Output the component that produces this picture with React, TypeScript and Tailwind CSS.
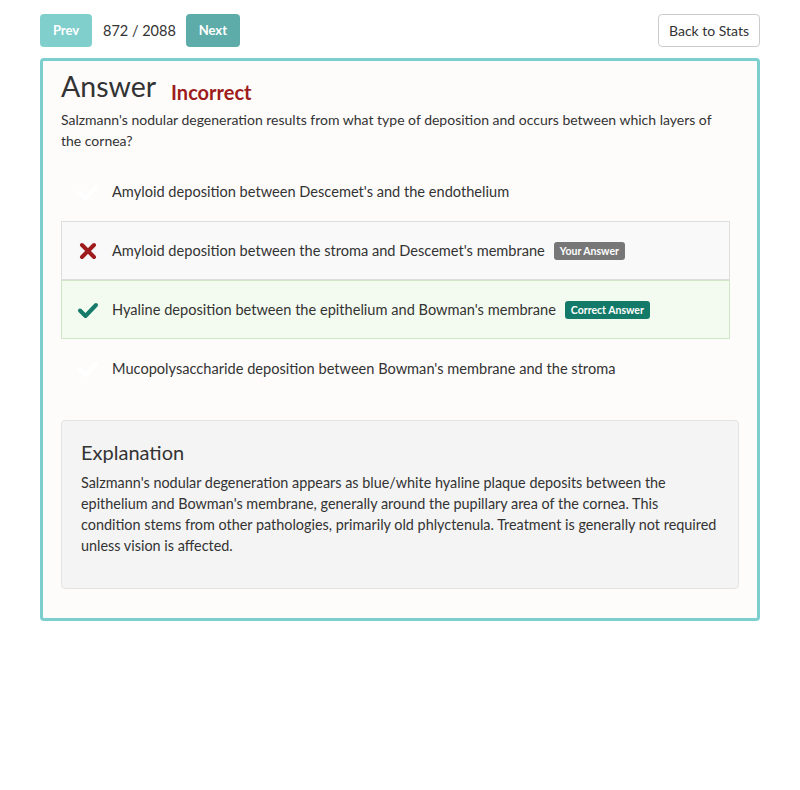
import React from 'react';

const font = { fontFamily: 'Lato, "Open Sans", sans-serif' };

type Option = {
  text: string;
  state: 'none' | 'wrong' | 'right';
};

const options: Option[] = [
  { text: "Amyloid deposition between Descemet's and the endothelium", state: 'none' },
  { text: "Amyloid deposition between the stroma and Descemet's membrane", state: 'wrong' },
  { text: "Hyaline deposition between the epithelium and Bowman's membrane", state: 'right' },
  { text: "Mucopolysaccharide deposition between Bowman's membrane and the stroma", state: 'none' },
];

function XIcon() {
  return (
    <svg width="18" height="18" viewBox="0 0 18 18">
      <path d="M3 3 L15 15 M15 3 L3 15" stroke="#9e1c1c" strokeWidth="4" strokeLinecap="round" />
    </svg>
  );
}

function CheckIcon({ color = '#157a69' }: { color?: string }) {
  return (
    <svg width="22" height="18" viewBox="0 0 22 18">
      <path d="M3 9.5 L8.5 15 L19 4" stroke={color} strokeWidth="4" fill="none" strokeLinecap="round" strokeLinejoin="round" />
    </svg>
  );
}

function OptionRow({ opt }: { opt: Option }) {
  let box = 'border border-transparent';
  if (opt.state === 'wrong') box = 'border border-[#dddddd] bg-[#f9f9f9]';
  if (opt.state === 'right') box = 'border border-[#cfe6c9] bg-[#f3fbf0]';
  return (
    <div className={`flex h-[59px] items-center px-[15px] ${box}`}>
      <div className="mr-[13px] flex w-[22px] justify-center">
        {opt.state === 'wrong' && <XIcon />}
        {opt.state === 'right' && <CheckIcon />}
        {opt.state === 'none' && <CheckIcon color="#ffffff" />}
      </div>
      <span className="text-[14.6px] text-[#333]">{opt.text}</span>
      {opt.state === 'wrong' && (
        <span className="ml-[9px] rounded-[3px] bg-[#777777] px-[6px] py-[2px] text-[10.5px] font-bold leading-[14px] text-white">
          Your Answer
        </span>
      )}
      {opt.state === 'right' && (
        <span className="ml-[9px] rounded-[3px] bg-[#137a69] px-[6px] py-[2px] text-[10.5px] font-bold leading-[14px] text-white">
          Correct Answer
        </span>
      )}
    </div>
  );
}

export default function App() {
  return (
    <div className="min-h-[790px] w-[800px] bg-white px-[40px] pt-[14px]" style={font}>
      <div className="flex items-center justify-between">
        <div className="flex items-center">
          <button className="h-[33px] w-[52px] rounded-[4px] bg-[#80cfcd] text-[13px] font-bold text-white">
            Prev
          </button>
          <span className="ml-[11px] mr-[10px] text-[14.5px] text-[#333]">872 / 2088</span>
          <button className="h-[33px] w-[54px] rounded-[4px] bg-[#5eaca9] text-[13px] font-bold text-white">
            Next
          </button>
        </div>
        <button className="h-[33px] w-[102px] rounded-[4px] border border-[#cccccc] bg-white text-[14px] text-[#333]">
          Back to Stats
        </button>
      </div>

      <div className="mt-[11px] rounded-[4px] border-[3px] border-[#7dcfcf] bg-[#fdfcfb] px-[18px] pb-[29px] pt-[5px]">
        <div className="flex items-end">
          <h1 className="text-[28.5px] leading-[40px] text-[#333]">Answer</h1>
          <span className="mb-[0px] ml-[15px] text-[20px] font-bold leading-[28px] text-[#9e1c1c]">Incorrect</span>
        </div>
        <p className="mt-[3px] text-[14px] leading-[21px] text-[#333]">
          Salzmann's nodular degeneration results from what type of deposition and occurs between which layers of
          <br />
          the cornea?
        </p>

        <div className="mt-[11px] w-[669px]">
          {options.map((o, i) => (
            <OptionRow key={i} opt={o} />
          ))}
        </div>

        <div className="mt-[22px] rounded-[4px] border border-[#e3e3e3] bg-[#f4f4f4] px-[19px] pb-[32px] pt-[18px]">
          <h2 className="text-[20px] leading-[26px] text-[#333]">Explanation</h2>
          <p className="mt-[7px] text-[14.4px] leading-[21px] text-[#333]">
            Salzmann's nodular degeneration appears as blue/white hyaline plaque deposits between the
            <br />
            epithelium and Bowman's membrane, generally around the pupillary area of the cornea. This
            <br />
            condition stems from other pathologies, primarily old phlyctenula. Treatment is generally not required
            <br />
            unless vision is affected.
          </p>
        </div>
      </div>
    </div>
  );
}
